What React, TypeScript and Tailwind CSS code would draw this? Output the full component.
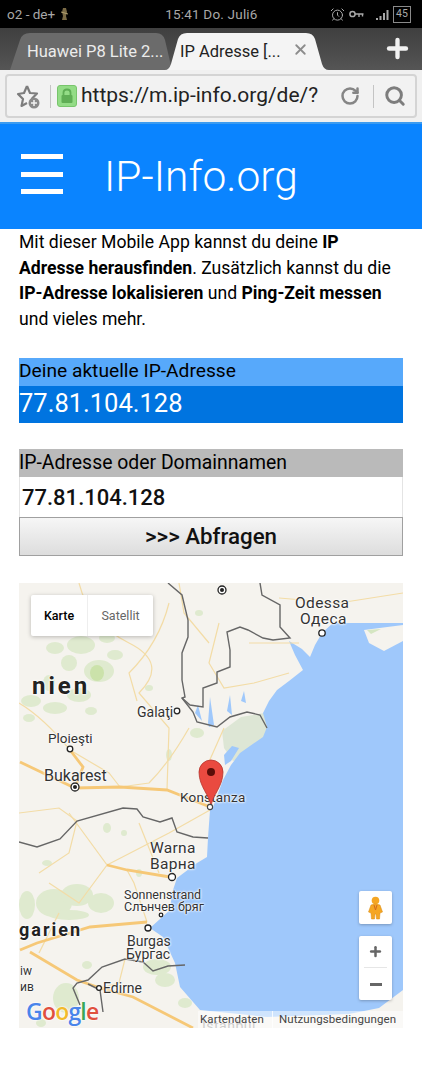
import { AlarmClock, Search, RotateCw, Plus, X } from "lucide-react";

function StatusBar() {
  return (
    <div className="flex h-[28px] items-center bg-black pl-[7px] pr-[11px] text-[#a8a8a8]">
      <span className="text-[13.5px]">o2 - de+</span>
      <svg className="ml-[5px]" width="9" height="14" viewBox="0 0 9 14">
        <path d="M3 1 L6 1 L7 5 L6 9 L7 13 L2 13 L3 9 L2 5 Z" fill="#7a6a45" />
        <path d="M1 5 L8 7" stroke="#b0a070" strokeWidth="1" />
      </svg>
      <span className="ml-[96px] text-[13.5px] tracking-[0.2px]">15:41 Do. Juli6</span>
      <div className="ml-auto flex items-center">
        <AlarmClock size={15} strokeWidth={1.6} />
        <svg className="ml-[4px]" width="15" height="9" viewBox="0 0 15 9">
          <circle cx="3.5" cy="4" r="2.6" fill="none" stroke="#a8a8a8" strokeWidth="1.5" />
          <path d="M6 4 H14.5 M10 4 V7 M13.5 4 V6.5" fill="none" stroke="#a8a8a8" strokeWidth="1.4" />
        </svg>
        <svg className="ml-[12px]" width="16" height="13" viewBox="0 0 16 13">
          <rect x="0" y="10" width="2" height="2" fill="#a8a8a8" />
          <rect x="3.5" y="8" width="2" height="4" fill="#a8a8a8" />
          <rect x="7" y="5" width="2" height="7" fill="#a8a8a8" />
          <rect x="10.5" y="2" width="2" height="10" fill="#a8a8a8" />
        </svg>
        <div className="ml-[1px] flex h-[17px] w-[18px] items-center justify-center border border-[#8a8a8a] text-[10.5px]">45</div>
      </div>
    </div>
  );
}

function TabBar() {
  return (
    <div className="relative flex h-[42px] items-end bg-gradient-to-b from-[#3f3f3f] to-[#555555]">
      <svg className="absolute left-0 top-0" width="340" height="42" viewBox="0 0 340 42">
        <path d="M10 42 L20 12 Q22 5 30 5 L156 5 Q163 5 165 12 L172 42 Z" fill="#6b6b6b" />
        <path d="M165 42 Q169 42 171 36 L178 11 Q180 5 187 5 L306 5 Q313 5 315 11 L322 36 Q324 42 329 42 Z" fill="#f4f4f4" />
      </svg>
      <span className="absolute left-[27px] top-[12px] text-[16.5px] text-[#ececec]">Huawei P8 Lite 2...</span>
      <span className="absolute left-[180px] top-[12px] text-[16.5px] text-[#222222]">IP Adresse [...</span>
      <X size={17} strokeWidth={2.6} className="absolute left-[292px] top-[13px] text-[#8c8c8c]" />
      <Plus size={29} strokeWidth={3.6} className="absolute left-[383px] top-[6px] text-[#f2f2f2]" />
    </div>
  );
}

function UrlBar() {
  return (
    <div className="flex h-[52px] items-center bg-[#f0f0f0] px-[5px]">
      <div className="flex h-[44px] w-full items-center rounded-[4px] border-2 border-[#d4d4d4] bg-[#f2f2f2]">
        <svg className="ml-[9px] shrink-0" width="26" height="26" viewBox="0 0 26 26">
          <path d="M11 3 L14 10 L21 10.5 L16 15.5 L17 19 M11 3 L8 10 L2 11 L7 16 L5.5 23 L11 20" fill="none" stroke="#7d7d7d" strokeWidth="2.2" strokeLinejoin="round" />
          <circle cx="18" cy="20" r="5.5" fill="#8a8a8a" />
          <path d="M18 17 V23 M15 20 H21" stroke="#f2f2f2" strokeWidth="1.5" />
        </svg>
        <div className="ml-[8px] h-[23px] w-px shrink-0 bg-[#c4c4c4]" />
        <div className="ml-[6px] flex h-[22px] w-[20px] shrink-0 items-center justify-center rounded-[3px] border border-[#78c56c] bg-[#93dc86]">
          <svg width="14" height="16" viewBox="0 0 14 16">
            <path d="M3.5 7 V4.5 Q3.5 1.5 7 1.5 Q10.5 1.5 10.5 4.5 V7" fill="none" stroke="#5fae55" strokeWidth="1.8" />
            <rect x="1.5" y="7" width="11" height="8" rx="1" fill="#5fae55" />
          </svg>
        </div>
        <span className="ml-[4px] whitespace-nowrap text-[21px] text-[#222222]">https://m.ip-info.org/de/?</span>
        <RotateCw size={20} strokeWidth={3} className="ml-auto shrink-0 text-[#858585]" />
        <div className="ml-[13px] h-[23px] w-px shrink-0 bg-[#c4c4c4]" />
        <Search size={22} strokeWidth={3.2} className="ml-[10px] mr-[9px] shrink-0 text-[#7d7d7d]" />
      </div>
    </div>
  );
}

function Header() {
  return (
    <div className="flex h-[107px] items-center border-t-2 border-t-[#3b9bf0] bg-[#0a84ff] pl-[21px] text-white">
      <div className="mb-[5px] flex w-[42px] flex-col gap-[12.5px]">
        <div className="h-[5px] bg-white" />
        <div className="h-[5px] bg-white" />
        <div className="h-[5px] bg-white" />
      </div>
      <span className="ml-[41px] text-[42.5px] font-light">IP-Info.org</span>
    </div>
  );
}

const waterPath =
  "M384 40 L314 40 L303 50 L296 62 L291 74 L283 66 L270 58 L276 72 L284 87 L270 98 L258 107 L250 118 L244 130 L248 144 L244 154 L221 170 L212 182 L204 197 L194 224 L191 227 L189 255 L188 274 L178 280 L158 295 L153 310 L151 327 L131 345 L144 354 L156 380 L161 404 L181 427 L210 430 L248 434 L330 431 L360 425 L384 407 Z";

// cx, cy, rx, ry of the green patches
const patches: [number, number, number, number][] = [
  [36, 65, 9, 6], [62, 62, 14, 9], [88, 55, 8, 5], [50, 80, 8, 8], [80, 88, 15, 11], [96, 72, 8, 5],
  [30, 100, 6, 8], [60, 112, 12, 7], [12, 118, 10, 6], [36, 125, 12, 6], [72, 128, 6, 4], [10, 135, 6, 4],
  [100, 20, 7, 4], [84, 30, 5, 6], [180, 30, 4, 3], [178, 150, 7, 5], [150, 172, 3, 6], [130, 105, 4, 3],
  [35, 320, 18, 14], [58, 312, 16, 11], [82, 320, 13, 10], [50, 332, 20, 5], [8, 322, 8, 14],
  [28, 280, 5, 3], [88, 245, 4, 5], [105, 250, 3, 3],
  [47, 415, 13, 15], [68, 382, 5, 4], [138, 384, 14, 8], [146, 397, 10, 7], [166, 420, 7, 5],
  [22, 440, 5, 4], [120, 290, 3, 4], [135, 262, 3, 4],
];

const yellowRoads = [
  "M60 0 Q70 40 110 60 T120 110 L150 145 L148 207",
  "M150 20 Q140 60 110 90 L118 118",
  "M170 145 Q150 180 130 200 L101 204",
  "M0 120 Q25 135 51 167 L90 190 L101 204",
  "M200 40 L190 80 L205 105 L235 100 L270 90",
  "M230 60 L280 60",
  "M160 0 L165 30 L190 60",
  "M260 15 L320 20 L384 10",
  "M205 145 L185 190 L190 224",
  "M191 227 L150 250 L88 282",
  "M50 230 L88 282 L60 320 L30 300",
  "M120 240 L140 290",
  "M0 230 L40 225 L58 238 L50 270 L20 290",
  "M128 339 L115 300 L108 287",
  "M106 376 L100 400 L80 405",
  "M20 370 L40 330",
];

const orangeRoads = [
  "M1 179 L24 190 L56 205 L101 204 L148 207 L181 220 L191 224",
  "M51 167 L64 184 L56 204",
  "M88 282 L108 287 L151 294",
  "M128 339 L71 344 L18 360 L1 367",
  "M11 369 L58 397 L81 405 L114 414 L174 445",
];

const borders = [
  "M149 0 L163 12 L169 37 L169 54 L163 70 L163 97 L166 114 L163 115 L174 129 L178 139 L198 144 L211 134 L228 129 L241 132 L248 145",
  "M241 0 L243 12 L261 22 L261 44 L271 55 L254 57 L244 55 L229 47 L221 44 L208 49 L211 67 L211 84 L198 89 L198 100 L184 105 L184 124 L171 122 L163 115",
  "M0 259 L18 264 L41 256 L58 238 L104 225 L118 226 L124 234 L141 239 L153 235 L158 249 L174 254 L189 255",
  "M166 382 L149 383 L134 388 L124 379 L106 376 L83 384 L69 397 L58 400 L54 405 L61 422",
  "M69 401 L81 407 L84 429",
];

const cityDots: [number, number, number, boolean][] = [
  [303, 50, 3.2, false],
  [158, 128, 2.8, false],
  [51, 166, 2.8, false],
  [56, 204, 4, true],
  [203, 7, 4, true],
  [153, 294, 3.5, false],
  [142, 332, 1.8, false],
  [129, 345, 3, false],
  [80, 405, 2.4, false],
];

const halo = "[text-shadow:0_0_2px_#ffffff,0_0_2px_#ffffff,0_0_3px_#ffffff]";

function MapDrawing() {
  return (
    <svg className="absolute inset-0" width="384" height="445" viewBox="0 0 384 445">
      <rect width="384" height="445" fill="#f5f3ee" />
      {patches.map(([cx, cy, rx, ry], i) => (
        <ellipse key={i} cx={cx} cy={cy} rx={rx} ry={ry} fill="#dfeacf" />
      ))}
      <ellipse cx="78" cy="90" rx="7" ry="8" fill="#cbe2aa" />
      <path d="M203 148 L222 134 L245 130 L250 150 L236 172 L214 178 L205 165 Z" fill="#dde6d5" />
      <path d={waterPath} fill="#9fc8fb" />
      <path d="M345 47 L384 42 L384 58 L365 68 L350 60 Z" fill="#f5f3ee" />
      <path d="M348 47 L362 46 L352 51 Z" fill="#d5e6c2" />
      <path d="M176 130 L179 122 L183 138 Z M189 140 L191 114 L195 142 L190 144 Z M208 128 L211 112 L213 132 Z M205 172 L213 163 L220 165 L212 178 L206 182 Z M222 118 L225 108 L227 120 Z" fill="#9fc8fb" />
      {yellowRoads.map((d, i) => (
        <path key={i} d={d} fill="none" stroke="#f3dca6" strokeWidth="1.2" />
      ))}
      {orangeRoads.map((d, i) => (
        <path key={i} d={d} fill="none" stroke="#f6c877" strokeWidth="2.8" />
      ))}
      {borders.map((d, i) => (
        <path key={i} d={d} fill="none" stroke="#666666" strokeWidth="1.4" />
      ))}
      {cityDots.map(([cx, cy, r, solid], i) => (
        <g key={i}>
          <circle cx={cx} cy={cy} r={r} fill="#ffffff" stroke="#222222" strokeWidth="1.3" />
          {solid && <circle cx={cx} cy={cy} r={r - 2} fill="#222222" />}
        </g>
      ))}
    </svg>
  );
}

function MapView() {
  return (
    <div className="relative mt-[27px] h-[445px] w-[384px] overflow-hidden">
      <MapDrawing />
      <span className={`absolute left-[276px] top-[9px] text-[15.5px] tracking-[0.4px] text-[#333333] ${halo}`}>Odessa</span>
      <span className={`absolute left-[281px] top-[25px] text-[15.5px] tracking-[0.4px] text-[#333333] ${halo}`}>Одеса</span>
      <span className={`absolute left-[13px] top-[85px] text-[24px] font-bold tracking-[3px] text-[#222222] ${halo}`}>nien</span>
      <span className={`absolute left-[118px] top-[119px] text-[14px] text-[#333333] ${halo}`}>Galaţi</span>
      <span className={`absolute left-[29px] top-[145px] text-[13.5px] text-[#333333] ${halo}`}>Ploieşti</span>
      <span className={`absolute left-[25px] top-[181px] text-[16px] text-[#333333] ${halo}`}>Bukarest</span>
      <span className={`absolute left-[161px] top-[204px] text-[13.5px] tracking-[0.2px] text-[#333333] ${halo}`}>Konstanza</span>
      <span className={`absolute left-[131px] top-[254px] text-[15.5px] tracking-[0.3px] text-[#333333] ${halo}`}>Warna</span>
      <span className={`absolute left-[131px] top-[270px] text-[15.5px] tracking-[0.3px] text-[#333333] ${halo}`}>Варна</span>
      <span className={`absolute left-[105px] top-[303px] text-[12.5px] text-[#333333] ${halo}`}>Sonnenstrand</span>
      <span className={`absolute left-[105px] top-[315px] text-[12.5px] text-[#333333] ${halo}`}>Слънчев бряг</span>
      <span className={`absolute left-[0px] top-[333px] text-[18px] font-bold tracking-[2px] text-[#222222] ${halo}`}>garien</span>
      <span className={`absolute left-[108px] top-[348px] text-[14px] text-[#333333] ${halo}`}>Burgas</span>
      <span className={`absolute left-[107px] top-[361px] text-[14px] text-[#333333] ${halo}`}>Бургас</span>
      <span className={`absolute left-[1px] top-[379px] text-[12px] text-[#333333] ${halo}`}>iw</span>
      <span className={`absolute left-[1px] top-[395px] text-[12px] text-[#333333] ${halo}`}>ив</span>
      <span className={`absolute left-[84px] top-[395px] text-[14px] text-[#333333] ${halo}`}>Edirne</span>

      <svg className="absolute left-[179px] top-[176px]" width="26" height="49" viewBox="0 0 26 49">
        <path d="M13 48 C12 36 1 28 1 13 A12 12 0 0 1 25 13 C25 28 14 36 13 48 Z" fill="#ea4a40" stroke="#b5342c" strokeWidth="0.8" />
        <circle cx="13" cy="13" r="4" fill="#5a0d08" />
      </svg>
      <svg className="absolute left-[187px] top-[220px]" width="8" height="8" viewBox="0 0 8 8">
        <circle cx="4" cy="4" r="2.6" fill="#ffffff" stroke="#444444" strokeWidth="1.1" />
      </svg>

      <div className="absolute left-[12px] top-[12px] flex h-[41px] w-[122px] rounded-[2px] bg-white text-[12.5px] shadow-[0_1px_4px_rgba(0,0,0,0.25)]">
        <div className="flex w-[57px] items-center justify-center border-r border-r-[#eeeeee] font-medium text-black">Karte</div>
        <div className="flex flex-1 items-center justify-center text-[#666666]">Satellit</div>
      </div>

      <div className="absolute left-[340px] top-[308px] flex h-[33px] w-[33px] items-center justify-center rounded-[2px] bg-white shadow-[0_1px_3px_rgba(0,0,0,0.25)]">
        <svg width="15" height="24" viewBox="0 0 15 24">
          <circle cx="7.5" cy="4.5" r="3.8" fill="#f5a623" />
          <path d="M3 9 Q7.5 7 12 9 L14.5 16 L12 17 L11.5 23 L8.5 23 L8 18 L7 18 L6.5 23 L3.5 23 L3 17 L0.5 16 Z" fill="#f5a623" stroke="#d98a10" strokeWidth="0.5" />
          <path d="M6 9 L7.5 14 L9 9" fill="none" stroke="#d2691e" strokeWidth="1" />
        </svg>
      </div>
      <div className="absolute left-[340px] top-[353px] flex h-[64px] w-[33px] flex-col items-center rounded-[2px] bg-white shadow-[0_1px_3px_rgba(0,0,0,0.25)]">
        <div className="flex h-[31px] items-center">
          <Plus size={15} strokeWidth={4} className="text-[#666666]" />
        </div>
        <div className="h-px w-[23px] bg-[#e6e6e6]" />
        <div className="flex h-[32px] items-center">
          <div className="h-[3px] w-[12px] bg-[#666666]" />
        </div>
      </div>

      <span className="absolute left-[183px] top-[433px] text-[14px] tracking-[0.5px] text-[#999999]">Istanbul</span>
      <div className="absolute left-[179px] top-[428px] flex h-[17px] w-[205px] items-center bg-white/50 pl-[2px] text-[11.5px] tracking-[0.1px] text-[#444444]">
        <span>Kartendaten</span>
        <div className="ml-[8px] h-full w-px bg-white/80" />
        <span className="ml-[6px]">Nutzungsbedingungen</span>
      </div>

      <div className="absolute left-[7px] top-[413px] font-['Open_Sans',sans-serif] text-[23px] font-semibold leading-[30px] tracking-[-0.8px] [text-shadow:0_0_2px_#ffffff,0_0_2px_#ffffff]">
        <span className="text-[#4a85ea]">G</span>
        <span className="text-[#e0503f]">o</span>
        <span className="text-[#f2bb2c]">o</span>
        <span className="text-[#4a85ea]">g</span>
        <span className="text-[#3aa757]">l</span>
        <span className="text-[#e0503f]">e</span>
      </div>
    </div>
  );
}

export default function App() {
  return (
    <div className="flex h-[1080px] w-[422px] flex-col overflow-hidden bg-white font-['Roboto',sans-serif]">
      <StatusBar />
      <TabBar />
      <UrlBar />
      <Header />
      <div className="flex flex-col px-[19px] text-black">
        <p className="mt-[1px] text-[17.6px] leading-[25.6px]">
          Mit dieser Mobile App kannst du deine <b className="font-bold">IP Adresse herausfinden</b>. Zusätzlich kannst du die{" "}
          <b className="font-bold">IP-Adresse lokalisieren</b> und <b className="font-bold">Ping-Zeit messen</b> und vieles mehr.
        </p>

        <div className="mt-[26px] flex h-[28px] items-center bg-[#57a9fb] pb-[2px] text-[19.2px] text-black">Deine aktuelle IP-Adresse</div>
        <div className="flex h-[37px] items-center bg-[#0074e0] pb-[3px] text-[25.5px] text-white">77.81.104.128</div>

        <div className="mt-[26px] flex h-[28px] items-center bg-[#bababa] pb-[1px] text-[19.4px] text-black">IP-Adresse oder Domainnamen</div>
        <div className="flex h-[40px] items-center border-x border-x-[#e4e4e4] pl-[2px] text-[22px] font-medium text-[#111111]">77.81.104.128</div>
        <div className="flex h-[39px] items-center justify-center border border-[#a0a0a0] bg-gradient-to-b from-[#f6f6f6] to-[#dddddd] text-[22.3px] font-medium text-[#111111]">
          &gt;&gt;&gt; Abfragen
        </div>

        <MapView />
      </div>
    </div>
  );
}
